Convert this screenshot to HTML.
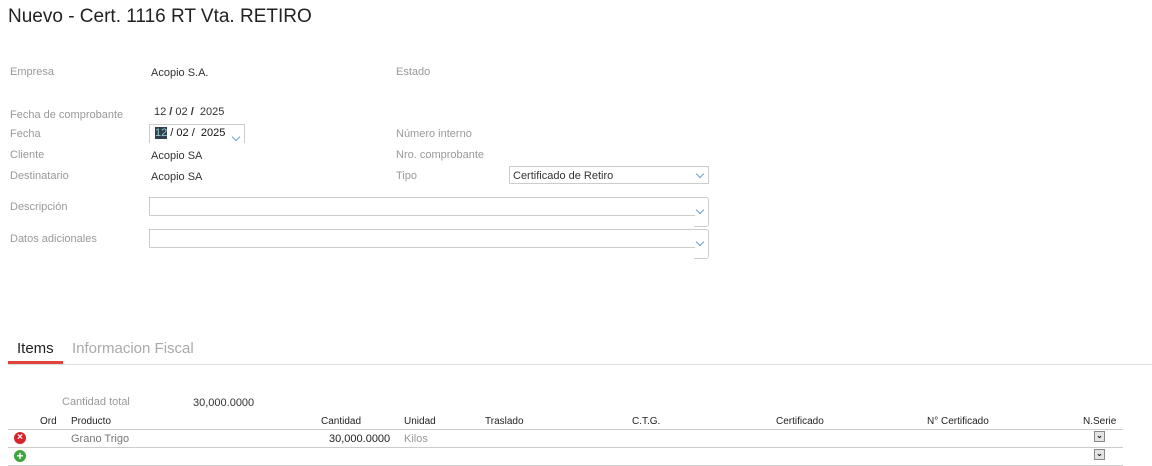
<!DOCTYPE html>
<html><head><meta charset="utf-8"><style>
body{margin:0;width:1152px;height:466px;background:#fff;font-family:"Liberation Sans",sans-serif;position:relative;overflow:hidden}
.a{position:absolute;white-space:nowrap}
.l{font-size:11px;color:#999}
.v{font-size:11px;color:#333}
.h{font-size:10px;color:#222}
.box{position:absolute;border:1px solid #ccc;box-sizing:border-box}
.chev{position:absolute;width:5px;height:5px;border-right:1px solid #6a9fd8;border-bottom:1px solid #6a9fd8;transform:rotate(45deg)}
.hl{position:absolute;height:1px;background:#ccc}
.sb{position:absolute;width:11px;height:11px;border:1px solid #888;background:#e4e4e4;box-sizing:border-box;font-size:8px;line-height:8px;text-align:center;color:#222;font-weight:bold}
</style></head><body>
<div class="a" style="left:8px;top:6px;font-size:19px;color:#222">Nuevo - Cert. 1116 RT Vta. RETIRO</div>
<div class="a l" style="left:10px;top:66px">Empresa</div>
<div class="a v" style="left:151px;top:67px">Acopio S.A.</div>
<div class="a l" style="left:396px;top:66px">Estado</div>
<div class="a l" style="left:10px;top:109px">Fecha de comprobante</div>
<div class="a v" style="left:154px;top:106px">12 <b>/</b> 02 <b>/</b>&nbsp; 2025</div>
<div class="a l" style="left:10px;top:128px">Fecha</div>
<div class="box" style="left:149px;top:124px;width:96px;height:19px;border-bottom:none"></div>
<div class="a v" style="left:155px;top:127px;color:#111"><span style="background:#2f3f4f;color:#9cc">12</span> / 02 /&nbsp; 2025</div>
<div class="chev" style="left:233px;top:134px"></div>
<div class="a l" style="left:396px;top:128px">Número interno</div>
<div class="a l" style="left:10px;top:149px">Cliente</div>
<div class="a v" style="left:151px;top:150px">Acopio SA</div>
<div class="a l" style="left:396px;top:149px">Nro. comprobante</div>
<div class="a l" style="left:10px;top:170px">Destinatario</div>
<div class="a v" style="left:151px;top:171px">Acopio SA</div>
<div class="a l" style="left:396px;top:170px">Tipo</div>
<div class="box" style="left:509px;top:166px;width:200px;height:18px"></div>
<div class="a v" style="left:513px;top:170px">Certificado de Retiro</div>
<div class="chev" style="left:697px;top:171px"></div>
<div class="a l" style="left:10px;top:201px">Descripción</div>
<div class="box" style="left:149px;top:197px;width:546px;height:19px;border-right:none"></div>
<div class="box" style="left:694px;top:197px;width:15px;height:30px;border-left:none;border-bottom:none;border-radius:0 3px 3px 0"></div>
<div class="a" style="left:694px;top:226px;width:13px;height:1px;background:#ccc"></div>
<div class="chev" style="left:697px;top:207px"></div>
<div class="a l" style="left:10px;top:233px">Datos adicionales</div>
<div class="box" style="left:149px;top:229px;width:546px;height:19px;border-right:none"></div>
<div class="box" style="left:694px;top:229px;width:15px;height:30px;border-left:none;border-bottom:none;border-radius:0 3px 3px 0"></div>
<div class="a" style="left:694px;top:258px;width:13px;height:1px;background:#ccc"></div>
<div class="chev" style="left:697px;top:239px"></div>
<div class="a" style="left:17px;top:340px;font-size:15px;color:#222">Items</div>
<div class="a" style="left:72px;top:340px;font-size:15px;color:#aaa">Informacion Fiscal</div>
<div class="hl" style="left:8px;top:364px;width:1144px;background:#ddd"></div>
<div class="a" style="left:8px;top:361px;width:55px;height:3px;background:#e0443a"></div>
<div class="a l" style="left:62px;top:396px">Cantidad total</div>
<div class="a v" style="left:193px;top:397px">30,000.0000</div>
<div class="a h" style="left:40px;top:416px">Ord</div>
<div class="a h" style="left:71px;top:416px">Producto</div>
<div class="a h" style="left:321px;top:416px">Cantidad</div>
<div class="a h" style="left:404px;top:416px">Unidad</div>
<div class="a h" style="left:485px;top:416px">Traslado</div>
<div class="a h" style="left:632px;top:416px">C.T.G.</div>
<div class="a h" style="left:776px;top:416px">Certificado</div>
<div class="a h" style="left:927px;top:416px">N° Certificado</div>
<div class="a h" style="left:1083px;top:416px">N.Serie</div>
<div class="hl" style="left:8px;top:429px;width:1115px"></div>
<div class="a" style="left:14px;top:432px;width:12px;height:12px;border-radius:50%;background:#d9232a;color:#fff;font-size:10px;line-height:12px;text-align:center;font-weight:bold">×</div>
<div class="a" style="left:71px;top:433px;font-size:11px;color:#777">Grano Trigo</div>
<div class="a v" style="left:329px;top:433px;color:#222">30,000.0000</div>
<div class="a" style="left:404px;top:433px;font-size:11px;color:#999">Kilos</div>
<div class="sb" style="left:1094px;top:431px">⌄</div>
<div class="hl" style="left:8px;top:447px;width:1115px"></div>
<div class="a" style="left:14px;top:450px;width:12px;height:12px;border-radius:50%;background:#3ea53e;color:#fff;font-size:12px;line-height:12px;text-align:center;font-weight:bold">+</div>
<div class="sb" style="left:1094px;top:449px">⌄</div>
<div class="hl" style="left:8px;top:465px;width:1115px"></div>
</body></html>
